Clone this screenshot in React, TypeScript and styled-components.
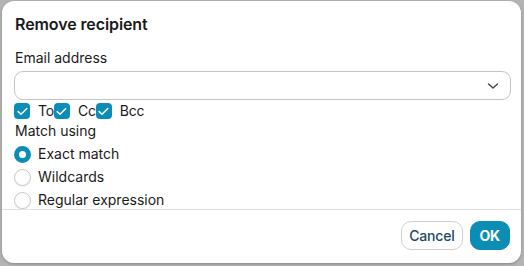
import React from 'react';
import styled, { createGlobalStyle } from 'styled-components';

const GlobalStyle = createGlobalStyle`
  html, body {
    margin: 0;
    padding: 0;
    background: #b4b4b4;
  }
  body {
    font-family: Inter, "Noto Sans", sans-serif;
    color: #1a1a1a;
  }
`;

const Backdrop = styled.div`
  width: 524px;
  height: 266px;
  padding: 1px 3px 3px 2px;
  box-sizing: border-box;
`;

const Dialog = styled.div`
  width: 519px;
  height: 262px;
  background: #fff;
  border-radius: 12px;
  box-shadow: 0 1px 3px rgba(0, 0, 0, 0.25);
  display: flex;
  flex-direction: column;
  overflow: hidden;
`;

const Body = styled.div`
  flex: 1;
  overflow: hidden;
  padding: 13px 10px 0 12px;
  display: flex;
  flex-direction: column;
`;

const Title = styled.h2`
  margin: 0 0 0 1px;
  font-size: 16px;
  font-weight: 600;
  line-height: 20px;
  letter-spacing: -0.1px;
`;

const Label = styled.div<{ $top: number }>`
  font-size: 14px;
  line-height: 18px;
  margin-top: ${(p) => p.$top}px;
  margin-left: 1px;
`;

const Select = styled.div`
  margin-top: 4px;
  height: 30px;
  box-sizing: border-box;
  border: 1px solid #c4c4c4;
  border-radius: 9px;
  display: flex;
  align-items: center;
  justify-content: flex-end;
  padding-right: 11px;
  color: #444;
`;

const CheckRow = styled.div`
  display: flex;
  align-items: center;
  margin-top: 2px;
  height: 18px;
`;

const Check = styled.label`
  display: flex;
  align-items: center;
  gap: 8px;
  font-size: 14px;
  line-height: 18px;
  letter-spacing: -0.2px;
`;

const Box = styled.span`
  width: 16px;
  height: 16px;
  border-radius: 4px;
  background: #0b8db5;
  display: flex;
  align-items: center;
  justify-content: center;
  flex-shrink: 0;
`;

const RadioList = styled.div`
  display: flex;
  flex-direction: column;
  gap: 5px;
  margin-top: 5px;
`;

const Radio = styled.label`
  display: flex;
  align-items: center;
  gap: 7px;
  font-size: 14px;
  line-height: 18px;
`;

const Dot = styled.span<{ $on?: boolean }>`
  width: 17px;
  height: 17px;
  border-radius: 50%;
  box-sizing: border-box;
  flex-shrink: 0;
  background: #fff;
  border: ${(p) => (p.$on ? '5.5px solid #0b8db5' : '1px solid #c8c8c8')};
  box-shadow: ${(p) => (p.$on ? 'none' : '0 1px 1px rgba(0,0,0,0.06)')};
`;

const Footer = styled.div`
  border-top: 1px solid #e2e2e2;
  height: 54px;
  box-sizing: border-box;
  display: flex;
  align-items: center;
  justify-content: flex-end;
  gap: 7px;
  padding: 0 11px 2px 0;
`;

const Button = styled.button<{ $primary?: boolean }>`
  height: 29px;
  border-radius: 10px;
  font-family: Inter, "Noto Sans", sans-serif;
  font-size: 14px;
  font-weight: ${(p) => (p.$primary ? 700 : 500)};
  padding: 0 ${(p) => (p.$primary ? 9 : 7)}px;
  letter-spacing: -0.2px;
  border: 1px solid ${(p) => (p.$primary ? '#0b8db5' : '#d0d0d0')};
  background: ${(p) => (p.$primary ? '#0b8db5' : '#fff')};
  color: ${(p) => (p.$primary ? '#fff' : '#1d4a66')};
`;

const Tick = () => (
  <svg width="11" height="9" viewBox="0 0 11 9" fill="none">
    <path d="M1.2 4.6 L4 7.3 L9.8 1.5" stroke="#fff" strokeWidth="1.5" strokeLinecap="round" strokeLinejoin="round" />
  </svg>
);

const Chevron = () => (
  <svg width="12" height="8" viewBox="0 0 12 8" fill="none">
    <path d="M1.5 2 L6 6 L10.5 2" stroke="#444" strokeWidth="1.4" strokeLinecap="round" strokeLinejoin="round" />
  </svg>
);

export default function App() {
  return (
    <>
      <GlobalStyle />
      <Backdrop>
        <Dialog>
          <Body>
            <Title>Remove recipient</Title>
            <Label $top={15}>Email address</Label>
            <Select>
              <Chevron />
            </Select>
            <CheckRow>
              <Check>
                <Box><Tick /></Box>To
              </Check>
              <Check>
                <Box><Tick /></Box>Cc
              </Check>
              <Check>
                <Box><Tick /></Box>Bcc
              </Check>
            </CheckRow>
            <Label $top={2}>Match using</Label>
            <RadioList>
              <Radio>
                <Dot $on />Exact match
              </Radio>
              <Radio>
                <Dot />Wildcards
              </Radio>
              <Radio>
                <Dot />Regular expression
              </Radio>
            </RadioList>
          </Body>
          <Footer>
            <Button>Cancel</Button>
            <Button $primary>OK</Button>
          </Footer>
        </Dialog>
      </Backdrop>
    </>
  );
}
